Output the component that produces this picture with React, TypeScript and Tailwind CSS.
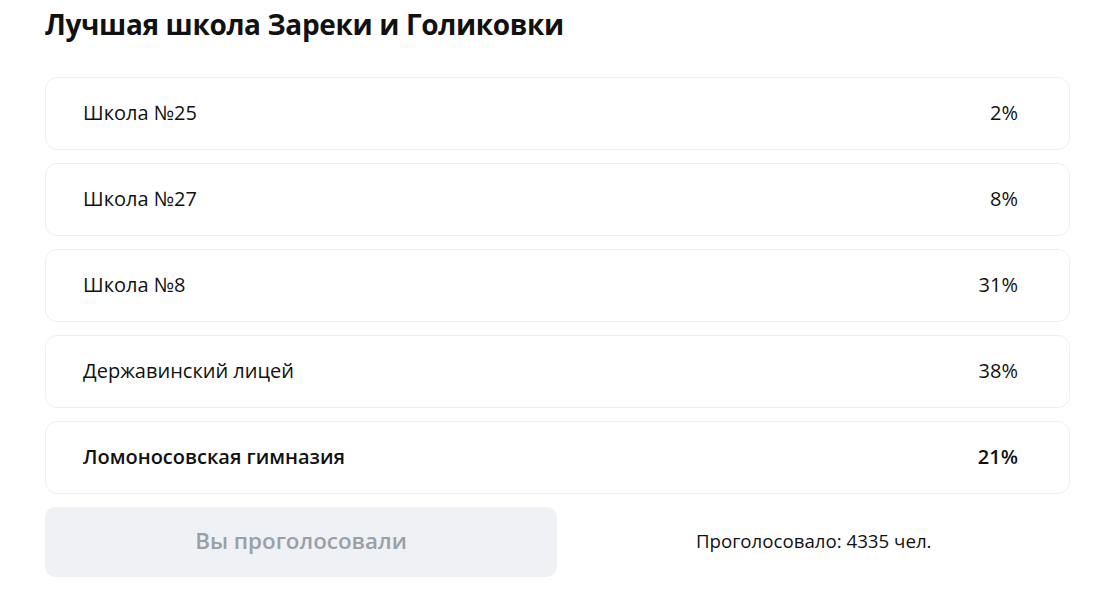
import React from 'react';

const options = [
  { name: 'Школа №25', percent: 2 },
  { name: 'Школа №27', percent: 8 },
  { name: 'Школа №8', percent: 31 },
  { name: 'Державинский лицей', percent: 38 },
  { name: 'Ломоносовская гимназия', percent: 21, chosen: true },
];

export default function App() {
  return (
    <div className="min-h-screen bg-white font-['Open_Sans',sans-serif] text-[#111]">
      <div className="w-[1025px] ml-[45px] pt-[6px]">
        <h1 className="text-[28px] font-bold leading-[36px] tracking-[-0.35px]">
          Лучшая школа Зареки и Голиковки
        </h1>
        <div className="mt-[35px] flex flex-col gap-[13px]">
          {options.map((o) => (
            <div
              key={o.name}
              className={
                'flex h-[73px] items-center justify-between rounded-[12px] border border-[#efefef] pb-[2px] pl-[37px] pr-[51px] text-[20px] ' +
                (o.chosen ? 'font-semibold' : '')
              }
            >
              <span>{o.name}</span>
              <span>{o.percent}%</span>
            </div>
          ))}
        </div>
        <div className="mt-[13px] grid grid-cols-2">
          <button
            disabled
            className="h-[70px] w-[512px] rounded-[10px] bg-[#eff1f4] pb-[2px] text-[22.4px] font-semibold text-[#9aa0a9]"
          >
            Вы проголосовали
          </button>
          <div className="flex items-center justify-center pb-[2px] text-[18.7px]">
            Проголосовало: 4335 чел.
          </div>
        </div>
      </div>
    </div>
  );
}
